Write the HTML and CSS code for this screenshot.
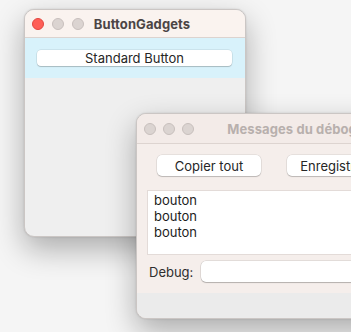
FILE: index.html
```html
<!DOCTYPE html>
<html lang="fr">
<head>
    <meta charset="UTF-8">
    <title>ButtonGadgets</title>
    <link rel="stylesheet" href="styles.css">
</head>
<body>
    <div class="desktop">
        <div class="window main-window">
            <div class="titlebar">
                <div class="lights">
                    <span class="light close"></span>
                    <span class="light"></span>
                    <span class="light"></span>
                </div>
                <div class="title">ButtonGadgets</div>
            </div>
            <div class="gadget-panel">
                <button class="mac-button wide">Standard Button</button>
            </div>
            <div class="window-body"></div>
        </div>

        <div class="window debug-window">
            <div class="titlebar">
                <div class="lights">
                    <span class="light"></span>
                    <span class="light"></span>
                    <span class="light"></span>
                </div>
                <div class="title inactive">Messages du débogage</div>
            </div>
            <div class="debug-body">
                <div class="button-row">
                    <button class="mac-button">Copier tout</button>
                    <button class="mac-button">Enregistrer...</button>
                </div>
                <div class="log">
                    <div>bouton</div>
                    <div>bouton</div>
                    <div>bouton</div>
                </div>
                <div class="debug-row">
                    <label>Debug:</label>
                    <div class="debug-input"></div>
                </div>
            </div>
            <div class="debug-footer"></div>
        </div>
    </div>
</body>
</html>
```

FILE: styles.css
```css
* {
    margin: 0;
    padding: 0;
    box-sizing: border-box;
}

body {
    font-family: Inter, 'Liberation Sans', sans-serif;
    font-size: 13px;
    background: #f5f5f5;
    width: 351px;
    height: 332px;
    overflow: hidden;
}

.desktop {
    position: relative;
    width: 351px;
    height: 332px;
    overflow: hidden;
}

.window {
    position: absolute;
    display: flex;
    flex-direction: column;
    border: 1px solid #cbc6c4;
    border-radius: 10px;
    overflow: hidden;
    box-shadow: 0 12px 30px rgba(0, 0, 0, 0.3), 0 0 2px rgba(0, 0, 0, 0.15);
}

.main-window {
    left: 24px;
    top: 9px;
    width: 222px;
    height: 228px;
    background: #efefef;
}

.debug-window {
    left: 136px;
    top: 113px;
    width: 322px;
    height: 206px;
    background: #f5eeeb;
}

.titlebar {
    position: relative;
    height: 28px;
    flex-shrink: 0;
    display: flex;
    align-items: center;
    justify-content: center;
    background: #faf3ef;
    border-bottom: 1px solid #dcd3cf;
}

.debug-window .titlebar {
    height: 30px;
    background: #f3ebe8;
    border-bottom-color: #ddd4d0;
}

.lights {
    position: absolute;
    left: 7px;
    top: 0;
    bottom: 0;
    display: flex;
    align-items: center;
    gap: 8px;
}

.debug-window .lights {
    gap: 7px;
}

.light {
    width: 12px;
    height: 12px;
    border-radius: 50%;
    background: #dbd4d1;
    border: 1px solid #c7bfbc;
}

.light.close {
    background: #fe5f57;
    border-color: #e2463f;
}

.title {
    padding-left: 14px;
    font-weight: 700;
    color: #4b4545;
    letter-spacing: 0.1px;
    white-space: nowrap;
}

.title.inactive {
    color: #b8b0ad;
}

.gadget-panel {
    height: 40px;
    flex-shrink: 0;
    background: #d8f2fb;
    padding: 12px 0 0 12px;
}

.mac-button {
    font-family: inherit;
    font-size: 13px;
    color: #262626;
    background: #ffffff;
    border: none;
    border-radius: 5px;
    white-space: nowrap;
    box-shadow: 0 0 0 0.5px rgba(0, 0, 0, 0.12), 0 1px 1px rgba(0, 0, 0, 0.18);
}

.mac-button.wide {
    width: 195px;
    height: 16px;
    line-height: 16px;
    border-radius: 4px;
}

.window-body {
    flex: 1;
}

.debug-body {
    flex: 1;
    display: flex;
    flex-direction: column;
    padding: 11px 0 0 10px;
}

.button-row {
    display: flex;
    gap: 26px;
    padding-left: 10px;
}

.button-row .mac-button {
    width: 104px;
    height: 21px;
    flex-shrink: 0;
}

.log {
    margin-top: 14px;
    height: 65px;
    background: #ffffff;
    border: 1px solid #e3dbd8;
    padding: 1px 6px;
    color: #1c1c1c;
    line-height: 16px;
}

.debug-row {
    display: flex;
    align-items: center;
    gap: 8px;
    margin-top: 6px;
    padding-left: 2px;
}

.debug-row label {
    color: #2e2e2e;
}

.debug-input {
    flex: 1;
    height: 21px;
    background: #ffffff;
    border-radius: 5px;
    box-shadow: 0 0 0 0.5px rgba(0, 0, 0, 0.15), 0 1px 1px rgba(0, 0, 0, 0.2);
}

.debug-footer {
    height: 25px;
    flex-shrink: 0;
    background: #ebebeb;
}
```
